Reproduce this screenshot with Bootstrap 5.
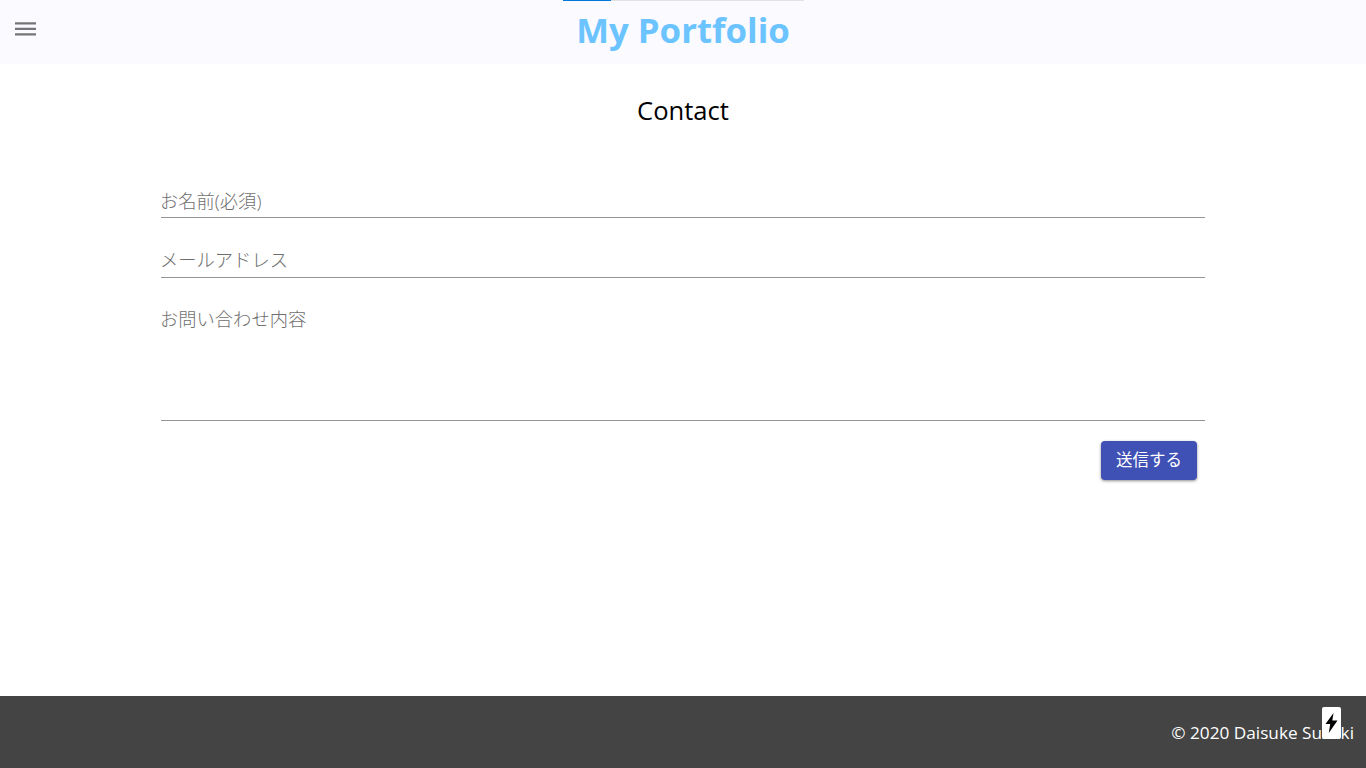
<!DOCTYPE html>
<html lang="ja">
<head>
  <meta charset="UTF-8" />
  <meta name="viewport" content="width=device-width, initial-scale=1" />
  <title>My Portfolio</title>
  <link href="https://cdn.jsdelivr.net/npm/bootstrap@5.3.0/dist/css/bootstrap.min.css" rel="stylesheet" />
  <style>
    html, body { height: 100%; }
    body {
      font-family: "Open Sans", "Noto Sans CJK JP", sans-serif;
      background: #fff;
      overflow: hidden;
    }
    .page-wrap { height: 768px; }
    .top-bar {
      height: 64px;
      background: #fbfaff;
      position: relative;
    }
    .load-track {
      position: absolute;
      top: 0;
      left: 563px;
      width: 241px;
      height: 1px;
      background: #e2e2e2;
    }
    .load-fill { width: 48px; height: 100%; background: #0076d6; }
    .menu-btn {
      position: absolute;
      left: 14px;
      top: 20px;
      width: 24px;
      height: 18px;
      padding: 0;
      border: 0;
      background: none;
      line-height: 0;
    }
    .site-title {
      font-size: 34.800px;
      font-weight: 700;
      color: #6bc4ff;
      margin: 0;
      line-height: 60px;
    }
    .page-title {
      font-size: 25.600px;
      font-weight: 400;
      color: #000;
      margin: 29px 0 0;
      line-height: 36px;
    }
    .contact-form { margin: 54px 161px 0; }
    .line-field {
      display: block;
      width: 100%;
      border: 0;
      border-bottom: 1px solid #949494;
      border-radius: 0;
      background: none;
      padding: 0;
      font-size: 18.300px;
      color: #333;
      outline: none;
      resize: none;
    }
    .line-field::placeholder { color: #6e6e6e; opacity: 1; font-weight: 300; }
    .field-name { height: 35px; line-height: 35px; margin-bottom: 24px; text-indent: -1px; }
    .field-mail { height: 36px; line-height: 33px; margin-bottom: 28px; text-indent: -1px; }
    .field-body { height: 115px; line-height: 26px; text-indent: -1px; }
    .send-btn {
      width: 96px;
      height: 39px;
      margin: 20px 8px 0 0;
      padding: 0;
      font-size: 16.500px;
      color: #fff;
      background: #3f51b5;
      border: 0;
      border-radius: 4px;
      box-shadow: 0 1px 3px rgba(0, 0, 0, .45);
    }
    .foot-bar {
      height: 72px;
      background: #444;
      color: #fff;
      font-size: 17.200px;
      position: relative;
      padding: 25px 12px 0 0;
      line-height: 24px;
    }
    .bolt-badge {
      position: absolute;
      left: 1322px;
      top: 11px;
      width: 19px;
      height: 32px;
      background: #fff;
      border-radius: 2px;
    }
  </style>
</head>
<body>
  <div class="page-wrap d-flex flex-column">
    <header class="top-bar text-center">
      <div class="load-track"><div class="load-fill"></div></div>
      <button class="menu-btn" type="button" aria-label="menu">
        <svg width="24" height="18" viewBox="0 0 24 18"><path fill="#757575" d="M1 2.250h21v2.250H1zM1 7.750h21v2.250H1zM1 13.250h21v2.250H1z"/></svg>
      </button>
      <h1 class="site-title">My Portfolio</h1>
    </header>

    <main class="flex-grow-1">
      <h2 class="page-title text-center">Contact</h2>
      <form class="contact-form">
        <input class="line-field field-name" type="text" placeholder="お名前(必須)" />
        <input class="line-field field-mail" type="email" placeholder="メールアドレス" />
        <textarea class="line-field field-body" placeholder="お問い合わせ内容"></textarea>
        <div class="d-flex justify-content-end">
          <button class="send-btn" type="button">送信する</button>
        </div>
      </form>
    </main>

    <footer class="foot-bar text-end">
      © 2020 Daisuke Suzuki
      <div class="bolt-badge d-flex align-items-center justify-content-center">
        <svg width="13" height="20" viewBox="0 0 13 20"><path fill="#000" d="M8.500 0 .5 11h4.700L3.800 20 12.500 7.500H7.300z"/></svg>
      </div>
    </footer>
  </div>
  <script src="https://cdn.jsdelivr.net/npm/bootstrap@5.3.0/dist/js/bootstrap.bundle.min.js"></script>
</body>
</html>
